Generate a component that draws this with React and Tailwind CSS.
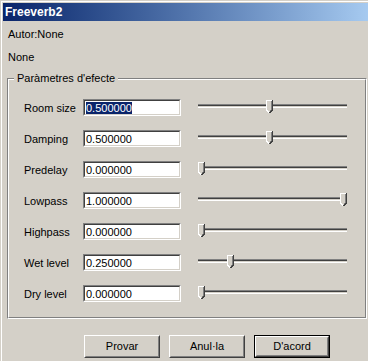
import React from "react";

// Slider values are pixel offsets of the thumb along a 149px track
const params = [
  { label: "Room size", value: "0.500000", thumb: 68, selected: true },
  { label: "Damping", value: "0.500000", thumb: 68 },
  { label: "Predelay", value: "0.000000", thumb: 0 },
  { label: "Lowpass", value: "1.000000", thumb: 142 },
  { label: "Highpass", value: "0.000000", thumb: 0 },
  { label: "Wet level", value: "0.250000", thumb: 29 },
  { label: "Dry level", value: "0.000000", thumb: 0 },
];

function Thumb() {
  return (
    <svg width="7" height="13" viewBox="0 0 7 13" shapeRendering="crispEdges">
      <polygon points="0,0 7,0 7,10 3.5,13 0,10" fill="#d4d0c8" />
      <polyline points="0.5,10 0.5,0.5 6,0.5" stroke="#ffffff" fill="none" />
      <polyline points="6.5,0 6.5,10 3.5,13" stroke="#404040" fill="none" />
      <polyline points="5.5,1 5.5,9.5 3.5,11.5" stroke="#808080" fill="none" />
      <line x1="0.5" y1="10" x2="3" y2="12.5" stroke="#ffffff" />
    </svg>
  );
}

function Slider({ pos }) {
  return (
    <div className="relative mt-[8px] ml-[17px] w-[149px] h-[13px]">
      <div className="mt-[4px] h-[4px] flex flex-col">
        <div className="h-px bg-[#808080]" />
        <div className="h-px bg-[#404040]" />
        <div className="h-px bg-[#d4d0c8]" />
        <div className="h-px bg-white" />
      </div>
      <div className="absolute top-0" style={{ left: pos }}>
        <Thumb />
      </div>
    </div>
  );
}

function Field({ value, selected }) {
  return (
    <div className="mt-[7px] w-[98px] h-[17px] bg-white border border-t-[#808080] border-l-[#808080] border-b-white border-r-white">
      <div className="h-full border border-t-[#404040] border-l-[#404040] border-b-[#d4d0c8] border-r-[#d4d0c8] pl-px pt-px leading-[13px] text-black overflow-hidden">
        {selected ? <span className="bg-[#0a246a] text-white">{value}</span> : value}
      </div>
    </div>
  );
}

function Button({ children, isDefault }) {
  const face = (
    <div className="h-full border border-t-white border-l-white border-b-[#404040] border-r-[#404040]">
      <div className="h-full flex items-center justify-center border border-t-[#d4d0c8] border-l-[#d4d0c8] border-b-[#808080] border-r-[#808080] leading-[13px] text-black">
        {children}
      </div>
    </div>
  );
  if (isDefault) {
    return <div className="w-[76px] h-[23px] border border-black">{face}</div>;
  }
  return <div className="w-[76px] h-[23px]">{face}</div>;
}

export default function App() {
  return (
    <div className="w-[368px] h-[361px] overflow-hidden bg-[#d4d0c8] pl-[3px] pt-[3px] shadow-[inset_1px_1px_0_#d4d0c8,inset_2px_2px_0_#ffffff] font-['Liberation_Sans',Arial,sans-serif] text-[11px] text-black">
      {/* Title bar */}
      <div className="h-[18px] bg-linear-to-r from-[#0a246a] to-[#a6caf0] pl-[2px] text-white font-bold text-[12px] leading-[18px]">
        Freeverb2
      </div>

      <div className="mt-[7px] ml-[5px] leading-[13px]">Autor:None</div>
      <div className="mt-[10px] ml-[5px] leading-[13px]">None</div>

      {/* Group box */}
      <div className="relative mt-[14px] ml-[4px] w-[360px] h-[241px] border border-t-[#808080] border-l-[#808080] border-b-white border-r-white">
        <div className="h-full border border-t-white border-l-white border-b-[#808080] border-r-[#808080] pt-[12px] pl-[15px]">
          {params.map((p) => (
            <div key={p.label} className="flex items-start h-[31px]">
              <div className="mt-[10px] w-[59px] leading-[13px]">{p.label}</div>
              <Field value={p.value} selected={p.selected} />
              <Slider pos={p.thumb} />
            </div>
          ))}
        </div>
        <div className="absolute left-[6px] top-[-7px] px-[3px] bg-[#d4d0c8] leading-[13px]">
          Paràmetres d'efecte
        </div>
      </div>

      {/* Buttons */}
      <div className="mt-[16px] ml-[81px] flex gap-[9px]">
        <Button>Provar</Button>
        <Button>Anul·la</Button>
        <Button isDefault>D'acord</Button>
      </div>
    </div>
  );
}
